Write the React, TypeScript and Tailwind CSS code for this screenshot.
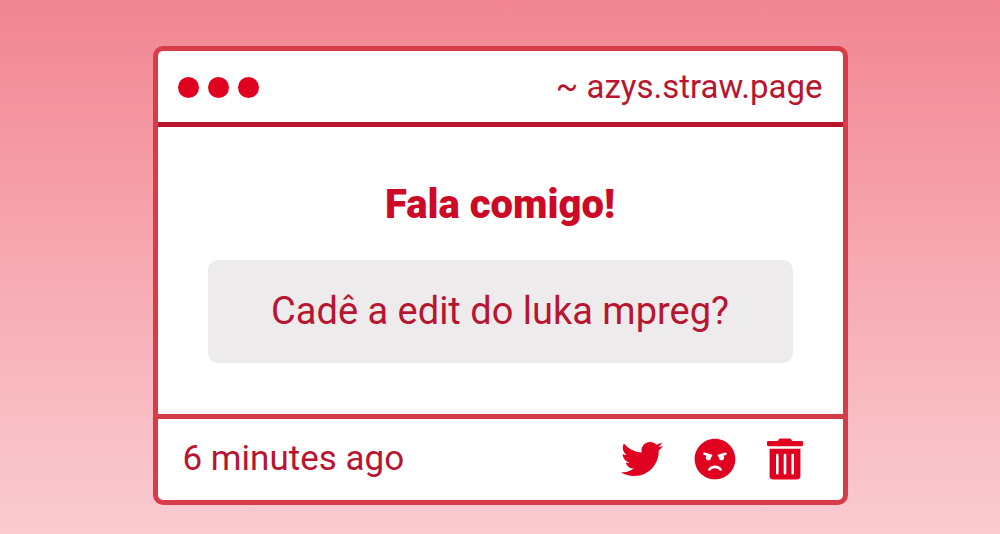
import React from "react";
import { FaAngry, FaTrashAlt, FaTwitter } from "react-icons/fa";

const actions = [
  { label: "Share on Twitter", Icon: FaTwitter, size: "w-[42px]" },
  { label: "Block sender", Icon: FaAngry, size: "w-[42px]" },
  { label: "Delete message", Icon: FaTrashAlt, size: "w-9" },
];

export default function App() {
  return (
    <main className="min-h-screen bg-linear-to-b from-[#f18593] to-[#f9ccd2] px-6 pt-[46px] pb-7 font-['Roboto',sans-serif] text-[#b81630]">
      <article className="mx-auto w-full max-w-[695px] overflow-hidden rounded-[10px] border-5 border-[#d73c48] bg-white">
        <header className="flex items-center justify-between border-b-5 border-[#b8142b] px-5 pt-4 pb-[15px]">
          <div className="flex gap-[9px]" aria-hidden="true">
            <span className="size-[21px] rounded-full bg-[#e0001f]" />
            <span className="size-[21px] rounded-full bg-[#e0001f]" />
            <span className="size-[21px] rounded-full bg-[#e0001f]" />
          </div>
          <a href="#profile" className="text-[33px] leading-10">
            ~ azys.straw.page
          </a>
        </header>
        <section className="flex flex-col items-center gap-[31px] px-[50px] pt-[54px] pb-[51px]">
          <h1 className="text-[40px] leading-12 font-black text-[#cc0a27]">Fala comigo!</h1>
          <p className="w-full rounded-[10px] bg-[#eeebec] px-6 pt-[27px] pb-7 text-center text-[38px] leading-12">
            Cadê a edit do luka mpreg?
          </p>
        </section>
        <footer className="flex items-center justify-between border-t-5 border-[#d03c48] pt-4 pr-10 pb-[17px] pl-[25px]">
          <time className="text-[35px] leading-12">6 minutes ago</time>
          <div className="flex items-center gap-[31px] text-[#e0001f]">
            {actions.map(({ label, Icon, size }) => (
              <button key={label} type="button" aria-label={label} className="cursor-pointer">
                <Icon className={`h-[42px] ${size}`} />
              </button>
            ))}
          </div>
        </footer>
      </article>
    </main>
  );
}
